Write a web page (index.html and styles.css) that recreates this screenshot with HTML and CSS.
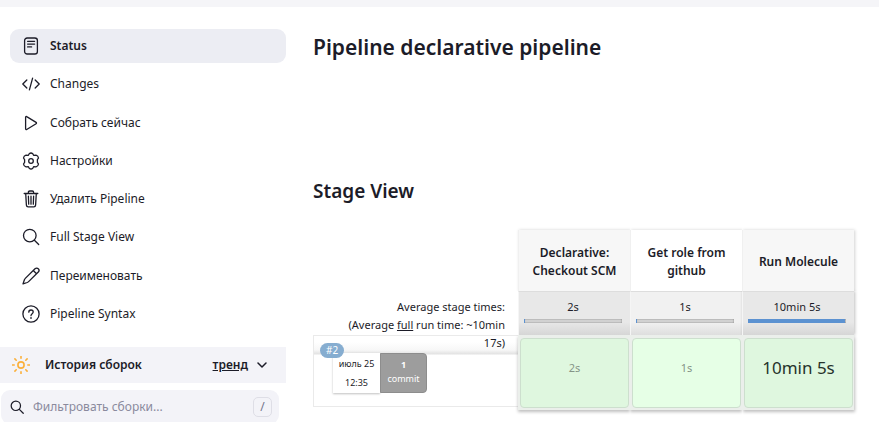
FILE: index.html
```html
<!DOCTYPE html>
<html lang="ru">
<head>
<meta charset="utf-8">
<title>Pipeline declarative pipeline</title>
<link rel="stylesheet" href="styles.css">
</head>
<body>
<div class="topbar"></div>
<div class="page">
  <aside class="sidebar">
    <nav class="tasks">
      <a class="task active" href="#">
        <svg class="icon" viewBox="0 0 18 18"><rect x="2.6" y="1" width="12.8" height="16" rx="2.6"/><path d="M5.6 4.3h7M5.6 7.1h7M5.6 9.9h4"/></svg>
        Status</a>
      <a class="task" href="#">
        <svg class="icon" viewBox="0 0 18 18"><path d="M4.8 5 .8 9l4 4M13.2 5l4 4-4 4M10.6 3.2 7.4 14.8"/></svg>
        Changes</a>
      <a class="task" href="#">
        <svg class="icon" viewBox="0 0 18 18"><path d="M3.6 3.2v11.6c0 .6.6 1 1.1.7l9.4-5.8c.5-.3.5-1 0-1.3L4.7 2.6c-.5-.4-1.100-.1-1.100.6z"/></svg>
        Собрать сейчас</a>
      <a class="task" href="#">
        <svg class="icon" viewBox="0 0 18 18"><circle cx="9" cy="9" r="2.3"/><path d="M7.200 1.700Q9 .3 10.800 1.700L11.600 3.300 14 3.100Q16.200 3.700 16.500 6L15.400 7.700V10.300L16.500 12Q16.200 14.300 14 14.900L11.600 14.700 10.800 16.300Q9 17.700 7.200 16.300L6.400 14.700 4 14.900Q1.800 14.300 1.500 12L2.600 10.300V7.700L1.500 6Q1.800 3.700 4 3.100L6.400 3.300z"/></svg>
        Настройки</a>
      <a class="task" href="#">
        <svg class="icon" viewBox="0 0 18 18"><path d="M2.200 3.500h13.600M3.700 3.500l.7 11.600c.1 1.100.7 1.700 1.700 1.700h5.800c1 0 1.600-.6 1.700-1.700l.7-11.600M6.400 3.500V2.300c0-.9.5-1.300 1.300-1.300h2.600c.8 0 1.300.4 1.300 1.300v1.200M9 6.200v8M6.400 6.200l.3 8M11.600 6.200l-.3 8"/></svg>
        Удалить Pipeline</a>
      <a class="task" href="#">
        <svg class="icon" viewBox="0 0 18 18"><circle cx="7.800" cy="7.600" r="6.300"/><path d="m12.400 12.200 4.300 4.300"/></svg>
        Full Stage View</a>
      <a class="task" href="#">
        <svg class="icon" viewBox="0 0 18 18"><path d="M13 1.700 3.300 11.400c-.4.4-.6.8-.9 1.400L1 16.900l4.200-1.400c.5-.2 1-.5 1.400-.9L16.300 5c.9-.9.9-2.300 0-3.200-.9-1-2.300-1-3.300-.1zM11.300 3.500l3.200 3.200"/></svg>
        Переименовать</a>
      <a class="task" href="#">
        <svg class="icon" viewBox="0 0 18 18"><circle cx="9" cy="9" r="8.100"/><path d="M6.800 7.200c0-1.300.9-2.200 2.200-2.200s2.200.8 2.200 2c0 1.600-2.200 1.700-2.200 3.500M9 12.400v1"/></svg>
        Pipeline Syntax</a>
    </nav>
    <div class="history">
      <svg class="icon sun" viewBox="0 0 18 18"><circle cx="9" cy="9" r="3.100"/><path d="M9 .4v1.800M9 15.800v1.800M.4 9h1.800M15.800 9h1.800M2.900 2.900l1.300 1.300M13.800 13.800l1.300 1.300M2.900 15.100l1.300-1.300M13.800 4.200l1.300-1.300"/></svg>
      <span>История сборок</span>
      <a class="trend" href="#">тренд</a>
      <button class="collapse" type="button" aria-label="Свернуть"><svg viewBox="0 0 10 10"><path d="m1 3 4 4 4-4"/></svg></button>
    </div>
    <label class="search">
      <svg viewBox="0 0 18 18"><circle cx="7.500" cy="7.500" r="6"/><path d="m12 12 5 5"/></svg>
      <input type="search" placeholder="Фильтровать сборки..." aria-label="Фильтровать сборки">
      <kbd>/</kbd>
    </label>
  </aside>
  <main>
    <h1>Pipeline declarative pipeline</h1>
    <h2>Stage View</h2>
    <table class="stages">
      <colgroup><col class="info"><col><col><col></colgroup>
      <thead>
        <tr><td></td><th scope="col">Declarative:<br>Checkout SCM</th><th scope="col">Get role from github</th><th scope="col">Run Molecule</th></tr>
      </thead>
      <tbody>
        <tr class="totals">
          <th scope="row"><div class="average">Average stage times:<br>(Average <u>full</u> run time: ~10min 17s)</div></th>
          <td>2s<div class="bar"><i style="width:1%"></i></div></td>
          <td>1s<div class="bar"><i style="width:1%"></i></div></td>
          <td>10min 5s<div class="bar"><i style="width:99%"></i></div></td>
        </tr>
        <tr class="run">
          <th scope="row">
            <div class="build">
              <a class="badge" href="#">#2</a>
              <div class="details">
                <div class="date">июль 25<br>12:35</div>
                <div class="commits"><b>1</b><br>commit</div>
              </div>
            </div>
          </th>
          <td><div class="result">2s</div></td>
          <td><div class="result">1s</div></td>
          <td><div class="result long">10min 5s</div></td>
        </tr>
      </tbody>
    </table>
  </main>
</div>
</body>
</html>
```
FILE: styles.css
```css
* { box-sizing: border-box; }
body {
  margin: 0;
  overflow: hidden;
  background: #fff;
  color: #1c1c28;
  font: 12px/18px "Noto Sans", sans-serif;
}
a { color: inherit; text-decoration: none; }
svg {
  flex: none;
  fill: none;
  stroke: currentColor;
  stroke-width: 1.3;
  stroke-linecap: round;
  stroke-linejoin: round;
}
.topbar { height: 7px; background: #f5f5f8; }
.page { display: grid; grid-template-columns: 286px 1fr; column-gap: 27px; }

.tasks {
  display: flex;
  flex-direction: column;
  justify-content: space-between;
  min-height: 302px;
  margin: 22px 0 16px 10px;
}
.task {
  display: flex;
  align-items: center;
  gap: 10px;
  height: 34px;
  padding-left: 12px;
  border-radius: 9px;
}
.task.active { background: #ecedf3; font-weight: 600; }
.icon { width: 18px; height: 18px; }

.history {
  display: flex;
  align-items: center;
  height: 36px;
  padding: 0 19px 0 12px;
  background: #f3f3f8;
  font-weight: 600;
}
.sun { margin-right: 15px; color: #fbb03b; stroke-width: 1.6; }
.trend { margin-left: auto; text-decoration: underline; }
.collapse {
  display: flex;
  margin-left: 9px;
  padding: 0;
  border: 0;
  background: none;
  color: inherit;
}
.collapse svg { width: 10px; height: 10px; stroke-width: 1.5; }

.search {
  display: flex;
  align-items: center;
  height: 34px;
  margin: 7px 7px 0 1px;
  padding: 0 7px 0 9px;
  border-radius: 9px;
  background: #f3f3f8;
}
.search svg { width: 14px; height: 14px; stroke-width: 1.6; }
.search input {
  flex: 1;
  min-width: 0;
  margin-left: 9px;
  padding: 0;
  border: 0;
  background: none;
  font: inherit;
}
.search input::placeholder { color: #8a8a9d; }
kbd {
  width: 19px;
  border: 1px solid #dedee6;
  border-radius: 5px;
  color: #73738c;
  font: inherit;
  text-align: center;
}

main { padding-right: 25px; }
h1, h2 { margin: 0; font-weight: 600; }
h1 { padding-top: 25px; font-size: 21px; line-height: 30px; }
h2 { margin: 116px 0 26px; font-size: 19px; line-height: 26px; }

.stages { width: 100%; border-collapse: separate; border-spacing: 0; table-layout: fixed; }
.info { width: 205px; }
.stages td, .stages th { padding: 0; text-align: center; }
.stages thead th {
  height: 61px;
  padding: 2px 12px 0;
  background: #f7f7f7;
  border-left: 1px solid #f0f0f0;
  font-weight: 600;
  box-shadow: 1px 0 3px rgba(0, 0, 0, .18);
  clip-path: inset(-4px 0 0 0);
}
.stages thead th:nth-child(3) { background: #fff; }
.stages thead th:nth-child(2) { clip-path: inset(-4px 0 0 -4px); }
.stages thead th:last-child { clip-path: inset(-4px -5px 0 0); }

.totals { font-size: 11px; }
.totals th, .run th { font-weight: 400; vertical-align: top; }
.average {
  position: relative;
  z-index: 1;
  height: 37px;
  padding: 0 13px 0 30px;
  text-align: right;
}
.totals th { height: 44px; padding-top: 7px; }
.stages .totals td {
  padding: 6px 8px 0 5px;
  background: linear-gradient(#e8e8e8 70%, #d6d6d6);
  border-left: 1px solid #f5f5f5;
  border-top: 1px solid #ddd;
  vertical-align: top;
}
.stages .totals td:nth-child(3) { background: linear-gradient(#f1f1f1 70%, #dedede); }
.bar {
  height: 4px;
  margin-top: 3px;
  background: #d6d6d6;
  box-shadow: inset 0 0 2px #777;
}
.bar i { display: block; height: 4px; background: #5c92d1; }
.stages .totals td:last-child { box-shadow: 1px 0 3px rgba(0, 0, 0, .25); }

.build {
  position: relative;
  height: 72px;
  padding: 17px 0 0 19px;
  border: 1px solid #eaeaea;
  border-right: 0;
  background: linear-gradient(#fff 6px, #f7f7f7 14px, #e2e2e2 18px, #fff 19px);
}
.badge {
  position: absolute;
  top: 7px;
  left: 6px;
  padding: 0 6px;
  border-radius: 8px;
  background: #86add0;
  color: #fff;
  font-size: 10px;
  line-height: 15px;
}
.details { display: flex; font-size: 9px; }
.date {
  width: 47px;
  height: 40px;
  padding-top: 1px;
  background: #fff;
  line-height: 19px;
  box-shadow: 0 1px 2px rgba(0, 0, 0, .25);
}
.commits {
  width: 47px;
  height: 40px;
  padding-top: 4px;
  border: 1px solid #8d8d8d;
  border-radius: 0 4px 4px 0;
  background: #9d9d9d;
  color: #fff;
  line-height: 14px;
}
.stages .run td {
  padding: 3px 1px 2px 2px;
  background: #ebefeb;
  font-size: 11px;
  vertical-align: top;
  box-shadow: 0 2px 3px rgba(0, 0, 0, .25);
  clip-path: inset(0 0 -6px 0);
}
.stages .run td:nth-child(2) { clip-path: inset(0 0 -6px -4px); }
.stages .run td:last-child {
  box-shadow: 1px 2px 3px rgba(0, 0, 0, .25);
  clip-path: inset(0 -5px -6px 0);
}
.result {
  height: 70px;
  border: 1px solid #cddfce;
  border-radius: 4px;
  background: #dff7df;
  color: #859487;
  line-height: 58px;
}
td:nth-child(3) .result { background: #e6ffe6; }
.result.long { color: #26332b; font-size: 17px; }
```
